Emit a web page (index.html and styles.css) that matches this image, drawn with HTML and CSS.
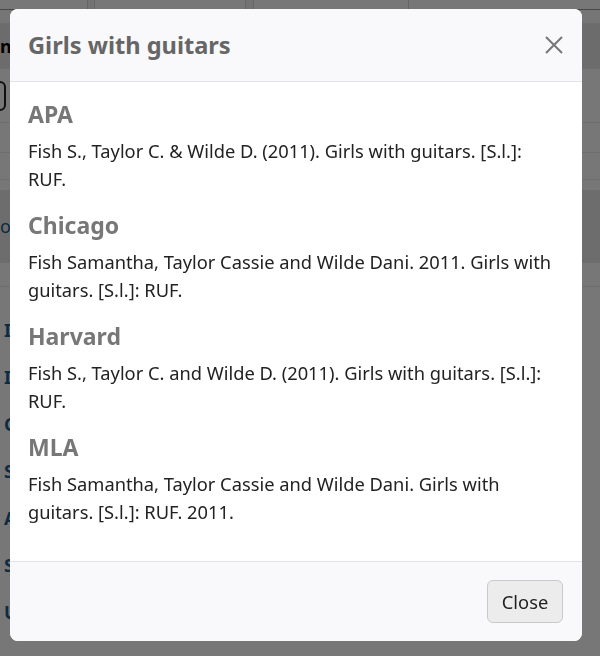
FILE: index.html
```html
<!DOCTYPE html>
<html lang="en">
<head>
<meta charset="utf-8">
<title>Girls with guitars</title>
<link rel="stylesheet" href="styles.css">
</head>
<body>
<div class="page">
  <div class="topstrip">
    <div class="cell c1"></div>
    <div class="cell c2"></div>
    <div class="cell c3"></div>
    <div class="cell c4"></div>
    <div class="cell c5"></div>
  </div>
  <div class="row band-light"></div>
  <div class="row band-dark"><span class="cut-title">n</span></div>
  <div class="row icon-row"><span class="oval"></span></div>
  <div class="row plain"></div>
  <div class="row plain short"></div>
  <div class="spacer"></div>
  <div class="row band-mid"><span class="cut-link">ov</span></div>
  <div class="row plain last"></div>
  <ul class="side-links">
    <li>I</li>
    <li>I</li>
    <li>C</li>
    <li>S</li>
    <li>A</li>
    <li>S</li>
    <li>U</li>
  </ul>
</div>

<div class="overlay"></div>

<div class="modal" role="dialog" aria-labelledby="modal-title">
  <header class="modal-header">
    <h2 id="modal-title" class="modal-title">Girls with guitars</h2>
    <button class="modal-x" aria-label="Close">
      <svg width="18" height="18" viewBox="0 0 18 18"><path d="M1 1 L17 17 M17 1 L1 17" stroke="#777" stroke-width="2" fill="none"/></svg>
    </button>
  </header>
  <div class="modal-body">
    <section class="cite">
      <h3 class="cite-style">APA</h3>
      <p class="cite-text">Fish S., Taylor C. &amp; Wilde D. (2011). Girls with guitars. [S.l.]: RUF.</p>
    </section>
    <section class="cite">
      <h3 class="cite-style">Chicago</h3>
      <p class="cite-text">Fish Samantha, Taylor Cassie and Wilde Dani. 2011. Girls with guitars. [S.l.]: RUF.</p>
    </section>
    <section class="cite">
      <h3 class="cite-style">Harvard</h3>
      <p class="cite-text">Fish S., Taylor C. and Wilde D. (2011). Girls with guitars. [S.l.]: RUF.</p>
    </section>
    <section class="cite">
      <h3 class="cite-style">MLA</h3>
      <p class="cite-text">Fish Samantha, Taylor Cassie and Wilde Dani. Girls with guitars. [S.l.]: RUF. 2011.</p>
    </section>
  </div>
  <footer class="modal-footer">
    <button class="btn-close">Close</button>
  </footer>
</div>
</body>
</html>
```

FILE: styles.css
```css
* { box-sizing: border-box; }

html, body {
  margin: 0;
  padding: 0;
  width: 600px;
  height: 656px;
  overflow: hidden;
}

body {
  font-family: "Noto Sans", "Open Sans", sans-serif;
  background: #fdfdfd;
  color: #222;
}

/* ---------- page behind the dialog ---------- */
.page {
  width: 600px;
}

.topstrip {
  display: flex;
  height: 10px;
  border-bottom: 1px solid #9a9a9a;
}
.cell { height: 100%; border-right: 1px solid #d8d8d8; }
.c1 { width: 88px; }
.c2 { width: 7px; background: #f4f4f4; }
.c3 { width: 151px; }
.c4 { width: 8px; background: #f4f4f4; }
.c5 { width: 155px; }

.row { border-bottom: 1px solid #e9e9e9; }
.band-light { height: 14px; background: #fafafa; }
.band-dark {
  height: 45px;
  background: #e6e6e6;
  display: flex;
  align-items: center;
  white-space: nowrap;
}
.cut-title {
  font-weight: 700;
  font-size: 18px;
  color: #000;
}
.icon-row {
  height: 54px;
  display: flex;
  align-items: center;
}
.oval {
  display: block;
  width: 12px;
  height: 30px;
  margin-left: -6px;
  border: 2px solid #222;
  border-radius: 6px;
}
.plain { height: 30px; }
.plain.short { height: 27px; }
.plain.last { height: 24px; }
.spacer { height: 10px; }
.band-mid {
  height: 73px;
  background: #e8e8e8;
  display: flex;
  align-items: center;
  white-space: nowrap;
}
.cut-link {
  color: #1a5a8c;
  font-size: 18px;
}

.side-links {
  list-style: none;
  margin: 31px 0 0 0;
  padding: 0;
  display: flex;
  flex-direction: column;
  gap: 23px;
}
.side-links li {
  font-size: 18px;
  line-height: 24px;
  font-weight: 700;
  color: #1d5f8f;
  margin-left: 4px;
  white-space: nowrap;
}

/* ---------- overlay & dialog ---------- */
.overlay {
  position: fixed;
  inset: 0;
  background: rgba(0, 0, 0, 0.53);
}

.modal {
  position: absolute;
  left: 10px;
  top: 9px;
  width: 572px;
  height: 632px;
  background: #fff;
  border-radius: 8px;
  overflow: hidden;
  display: flex;
  flex-direction: column;
}

.modal-header {
  height: 73px;
  flex: none;
  background: #f9f8fb;
  border-bottom: 1px solid #e3e2e6;
  display: flex;
  align-items: center;
  justify-content: space-between;
  padding: 0 18px 0 18px;
}

.modal-title {
  margin: 0;
  font-size: 23.6px;
  line-height: 30px;
  font-weight: 700;
  color: #666;
}

.modal-x {
  border: 0;
  background: transparent;
  padding: 0;
  width: 18px;
  height: 18px;
  display: block;
  margin-right: 1px;
}
.modal-x svg { display: block; }

.modal-body {
  flex: 1;
  padding: 17px 22px 0 18px;
}

.cite { margin-bottom: 17px; }

.cite-style {
  margin: 0 0 8px 0;
  font-size: 23px;
  line-height: 30px;
  font-weight: 700;
  color: #777;
}

.cite-text {
  margin: 0;
  font-size: 18.3px;
  line-height: 28px;
  color: #222;
}

.modal-footer {
  height: 80px;
  flex: none;
  background: #f9f8fb;
  border-top: 1px solid #e3e2e6;
  display: flex;
  align-items: center;
  justify-content: flex-end;
  padding: 0 19px;
}

.btn-close {
  font-family: "Noto Sans", "Open Sans", sans-serif;
  font-size: 18.3px;
  color: #222;
  background: #ececec;
  border: 1px solid #c9c9c9;
  border-radius: 6px;
  height: 43px;
  width: 76px;
  padding: 0;
}
```
